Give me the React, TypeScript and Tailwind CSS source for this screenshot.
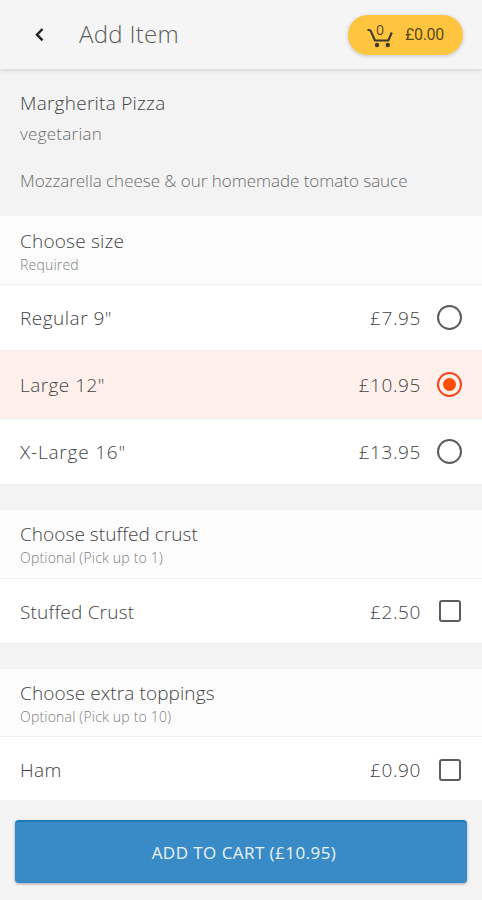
import { useState } from 'react';

const CartIcon = () => (
  <svg width="28" height="27" viewBox="0 0 28 27" fill="none" className="text-[#3b3a2c]">
    <path d="M.5 9h1.500c.9 0 1.400.4 1.800 1.100L8 19.500h13.300L24.800 11.500" stroke="currentColor" strokeWidth="2.100" strokeLinejoin="round" />
    <circle cx="10" cy="24" r="2.200" fill="currentColor" />
    <circle cx="20.800" cy="24" r="2.200" fill="currentColor" />
  </svg>
);

const Radio = ({ checked }: { checked: boolean }) => (
  <span
    className={
      checked
        ? 'flex size-[25px] items-center justify-center rounded-full border-2 border-[#f8431a]'
        : 'flex size-[25px] items-center justify-center rounded-full border-2 border-[#5c5c5c]'
    }
  >
    {checked && <span className="size-[13px] rounded-full bg-[#ff4d05]" />}
  </span>
);

const Checkbox = ({ checked }: { checked: boolean }) => (
  <span className="flex size-[25px] items-center justify-center">
    <span
      className={
        checked
          ? 'size-[22px] rounded-[3px] border-2 border-[#f8431a] bg-[#ff4d05]'
          : 'size-[22px] rounded-[3px] border-2 border-[#5c5c5c]'
      }
    />
  </span>
);

const groups = [
  {
    title: 'Choose size',
    hint: 'Required',
    type: 'radio',
    titleClass: 'tracking-[0.2px]',
    headClass: 'h-[69px] pt-[13px]',
    options: [
      { name: 'Regular 9"', price: '£7.95', rowClass: 'h-[66px]', nameClass: 'tracking-[0.5px]' },
      { name: 'Large 12"', price: '£10.95', rowClass: 'h-[68px]', nameClass: 'tracking-[0.45px]' },
      { name: 'X-Large 16"', price: '£13.95', rowClass: 'h-[66px]', nameClass: 'tracking-[0.8px]' }
    ]
  },
  {
    title: 'Choose stuffed crust',
    hint: 'Optional (Pick up to 1)',
    type: 'checkbox',
    titleClass: 'tracking-[0.05px]',
    headClass: 'h-[69px] pt-3',
    options: [{ name: 'Stuffed Crust', price: '£2.50', rowClass: 'h-[65px]', nameClass: 'tracking-[0.2px]' }]
  },
  {
    title: 'Choose extra toppings',
    hint: 'Optional (Pick up to 10)',
    type: 'checkbox',
    titleClass: 'tracking-[0.1px]',
    headClass: 'h-[68px] pt-3',
    options: [{ name: 'Ham', price: '£0.90', rowClass: 'h-[66px]', nameClass: 'tracking-[0.4px]' }]
  }
];

const App = () => {
  const [size, setSize] = useState('Large 12"');
  const [extras, setExtras] = useState<string[]>([]);

  const toggle = (type: string, name: string) => {
    if (type === 'radio') {
      setSize(name);
    } else {
      setExtras((prev) => (prev.includes(name) ? prev.filter((e) => e !== name) : [...prev, name]));
    }
  };

  return (
    <div className="flex h-[900px] w-[482px] flex-col overflow-hidden bg-[#f3f3f3] font-['Open_Sans',sans-serif] font-light text-[#444]">
      <header className="z-10 flex h-[69px] shrink-0 items-center bg-[#f5f5f5] pr-[19px] pl-[34px] shadow-[0_1px_4px_rgba(0,0,0,0.16)]">
        <button className="flex w-[45px] items-center" aria-label="Back">
          <svg width="11" height="16" viewBox="0 0 11 16" fill="none">
            <path d="M8.500 2 3 7.700l5.500 5.700" stroke="#222" strokeWidth="2.400" />
          </svg>
        </button>
        <h1 className="-mt-px text-[24px] tracking-[0.3px] text-[#5c5c5c]">Add Item</h1>
        <button className="ml-auto flex h-10 w-[115px] items-center rounded-full bg-[#ffc53f] pl-[19px] shadow-[0_1px_4px_rgba(0,0,0,0.2)]">
          <span className="relative">
            <CartIcon />
            <span className="absolute top-[2px] left-[9px] text-[14px] leading-[14px] font-normal text-[#5b4a1d]">0</span>
          </span>
          <span className="ml-[10px] pt-px font-['Roboto',sans-serif] text-[16px] font-normal tracking-[-0.3px] text-[#5b4a1d]">£0.00</span>
        </button>
      </header>

      <section className="h-[147px] shrink-0 px-5 pt-[22px]">
        <h2 className="text-[19px] leading-6 tracking-[0.25px]">Margherita Pizza</h2>
        <p className="mt-[7px] text-[17px] leading-6 tracking-[0.25px] text-[#6b6b6b]">vegetarian</p>
        <p className="mt-[23px] text-[17px] leading-6 tracking-[-0.03px] whitespace-nowrap text-[#6b6b6b]">
          Mozzarella cheese &amp; our homemade tomato sauce
        </p>
      </section>

      <main className="flex h-[584px] shrink-0 flex-col gap-[25px] overflow-hidden">
        {groups.map((group) => (
          <section key={group.title} className="bg-white">
            <div className={`border-b border-[#efefef] bg-[#fcfcfc] px-5 ${group.headClass}`}>
              <h3 className={`text-[19px] leading-6 ${group.titleClass}`}>{group.title}</h3>
              <p className="mt-[3px] text-[14px] leading-[18px] tracking-[0.2px] text-[#7c7c7c]">{group.hint}</p>
            </div>
            {group.options.map((option) => {
              const checked = group.type === 'radio' ? size === option.name : extras.includes(option.name);
              return (
                <button
                  key={option.name}
                  onClick={() => toggle(group.type, option.name)}
                  className={`flex w-full items-center border-b border-[#efefef] pr-5 pl-5 text-[19px] ${option.rowClass} ${checked ? 'bg-[#fff0ec]' : 'bg-white'}`}
                >
                  <span className={`pt-0.5 ${option.nameClass}`}>{option.name}</span>
                  <span className="mr-4 ml-auto pt-0.5 tracking-[0.6px]">{option.price}</span>
                  {group.type === 'radio' ? <Radio checked={checked} /> : <Checkbox checked={checked} />}
                </button>
              );
            })}
          </section>
        ))}
      </main>

      <footer className="h-[100px] shrink-0 bg-[#f4f4f4] px-[15px] pt-5">
        <button className="h-[63px] w-full rounded-[4px] border-t-2 border-[#1d7ab8] bg-[#388bc6] pl-1.5 text-[17px] font-normal tracking-[0.45px] text-white/90 shadow-[0_1px_3px_rgba(0,0,0,0.35)]">
          ADD TO CART (£10.95)
        </button>
      </footer>
    </div>
  );
};

export default App;
